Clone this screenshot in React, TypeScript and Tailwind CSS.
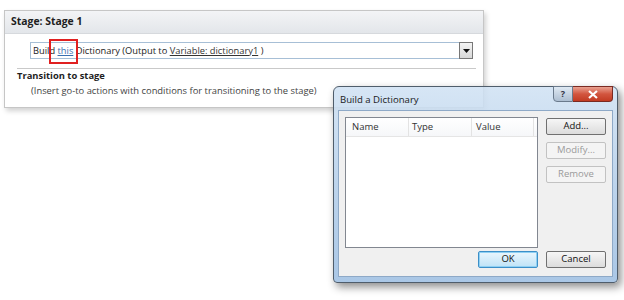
import React from "react";

const font = { fontFamily: '"Open Sans", "Noto Sans", Arial, sans-serif' };

const StagePanel = () => (
  <div className="ml-[4px] mt-[10px] w-[480px] h-[98px] border border-[#c6c6c6] bg-white shadow-[2px_3px_5px_rgba(0,0,0,0.18)]">
    <div className="h-[23px] bg-gradient-to-b from-[#f3f4f6] to-[#e3e6ea] border-b border-[#d6d9dd] pl-[6px] flex items-center text-[10.4px] font-bold text-[#1e1e1e]">
      Stage: Stage 1
    </div>
    <div className="relative ml-[25px] mt-[8px] w-[443px] h-[17px] border border-[#a7bfd6] flex items-center pl-[2px] text-[9.3px] text-[#222]">
      <span>Build&nbsp;</span>
      <span className="text-[#3a6fb0] underline">this</span>
      <span>&nbsp;Dictionary (Output to&nbsp;</span>
      <span className="underline text-[#333]">Variable: dictionary1</span>
      <span>&nbsp;)</span>
      <div className="ml-auto mr-[-1px] w-[14px] h-[17px] border border-[#777] bg-gradient-to-b from-[#f4f4f4] to-[#d8d8d8] flex items-center justify-center">
        <svg width="7" height="4" viewBox="0 0 7 4"><path d="M0 0H7L3.5 4Z" fill="#111" /></svg>
      </div>
      {/* red highlight annotation */}
      <div className="absolute left-[18px] top-[-4px] w-[29px] h-[25px] border-2 border-[#e02020]" />
    </div>
    <div className="ml-[12px] mt-[9px] w-[459px] border-t border-[#c9c9c9]" />
    <div className="ml-[12px] text-[9.4px] font-bold text-[#1e1e1e] leading-[14px]">Transition to stage</div>
    <div className="ml-[26px] mt-px text-[9.4px] text-[#444] leading-[14px]">
      (Insert go-to actions with conditions for transitioning to the stage)
    </div>
  </div>
);

const Btn = ({ label, disabled, primary }: { label: string; disabled?: boolean; primary?: boolean }) => (
  <div
    className={
      "w-[60px] h-[17px] rounded-[2px] border flex items-center justify-center text-[9.5px] " +
      (disabled
        ? "border-[#c2c2c2] bg-[#f4f4f4] text-[#9a9a9a]"
        : primary
        ? "border-[#3c8fc8] bg-gradient-to-b from-[#eaf6fd] to-[#bfe3f7] text-[#111] shadow-[inset_0_0_0_1px_#8fd0f3]"
        : "border-[#707070] bg-gradient-to-b from-[#f6f6f6] to-[#dcdcdc] text-[#111]")
    }
  >
    {label}
  </div>
);

const Dialog = () => (
  <div className="absolute left-[333px] top-[86px] w-[285px] h-[197px] rounded-t-[6px] rounded-b-[4px] border border-[#4f5d6b] bg-gradient-to-b from-[#cfe1f3d9] via-[#bdd4ec] to-[#aac7e6] shadow-[3px_4px_8px_rgba(0,0,0,0.45)] flex flex-col">
    <div className="h-[23px] flex items-start">
      <div className="pl-[6px] pt-[6px] text-[9.6px] text-[#1b1b1b]">Build a Dictionary</div>
      <div className="ml-auto mr-[4px] mt-[-1px] flex">
        <div className="w-[20px] h-[16px] rounded-bl-[4px] border border-[#6a7a8c] bg-gradient-to-b from-[#dfe9f3] to-[#aebfd2] flex items-center justify-center text-[9px] text-[#334] font-bold">
          ?
        </div>
        <div className="w-[40px] h-[16px] rounded-br-[4px] border border-l-0 border-[#7a2a22] bg-gradient-to-b from-[#e8a090] via-[#d2553f] to-[#c23b22] flex items-center justify-center">
          <svg width="10" height="9" viewBox="0 0 10 9">
            <path d="M1 1L9 8M9 1L1 8" stroke="#fff" strokeWidth="2.2" />
          </svg>
        </div>
      </div>
    </div>
    <div className="mx-[4px] mb-[5px] flex-1 border border-[#8ea9c7] bg-[#f0f0f0] flex flex-col px-[6px] pt-[6px] pb-[8px]">
      <div className="flex gap-[8px]">
        <div className="w-[195px] h-[131px] border border-[#828790] bg-white flex flex-col">
          <div className="h-[19px] flex text-[9.5px] text-[#333] border-b border-[#e5e5e5] bg-gradient-to-b from-white to-[#f6f7f9]">
            <div className="w-[63px] pl-[6px] flex items-center border-r border-[#e3e3e3]">Name</div>
            <div className="w-[63px] pl-[3px] flex items-center border-r border-[#e3e3e3]">Type</div>
            <div className="w-[62px] pl-[4px] flex items-center border-r border-[#e3e3e3]">Value</div>
          </div>
        </div>
        <div className="flex flex-col gap-[7px] pt-[1px]">
          <Btn label="Add..." />
          <Btn label="Modify..." disabled />
          <Btn label="Remove" disabled />
        </div>
      </div>
      <div className="mt-auto flex justify-end gap-[8px]">
        <Btn label="OK" primary />
        <Btn label="Cancel" />
      </div>
    </div>
  </div>
);

export default function App() {
  return (
    <div className="relative w-[624px] h-[300px] bg-white overflow-hidden" style={font}>
      <StagePanel />
      <Dialog />
    </div>
  );
}
